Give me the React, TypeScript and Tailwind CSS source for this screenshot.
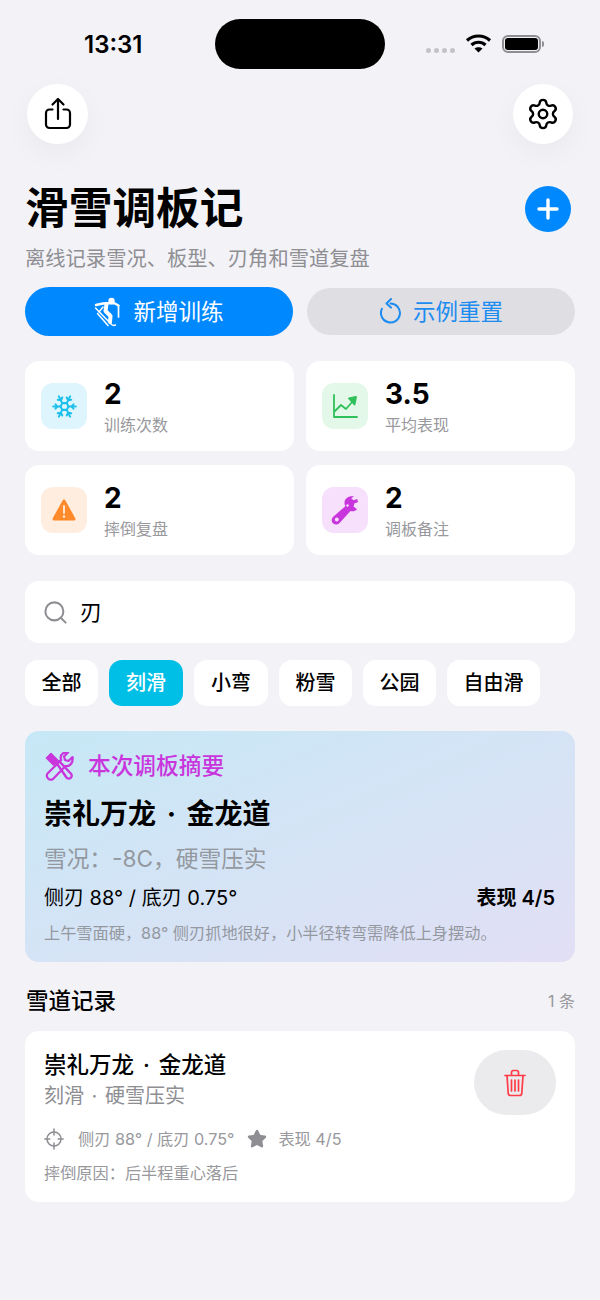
import { Search, Settings, Snowflake, Star } from "lucide-react";

const FONT = { fontFamily: 'Inter, "Noto Sans CJK SC", sans-serif' };

function ShareIcon() {
  return (
    <svg width="30" height="34" viewBox="0 0 30 34" fill="none" stroke="#000" strokeWidth="2.2" strokeLinecap="round" strokeLinejoin="round">
      <path d="M9.5 12.5H6.5a3.5 3.5 0 0 0-3.5 3.5v11.5a3.5 3.5 0 0 0 3.5 3.5h17a3.5 3.5 0 0 0 3.5-3.5V16a3.5 3.5 0 0 0-3.5-3.5h-3" />
      <path d="M15 22V2.5M9.5 7.5 15 2l5.5 5.5" />
    </svg>
  );
}

function SkierIcon() {
  return (
    <svg width="27" height="30" viewBox="0 0 27 30" fill="none" stroke="#fff" strokeLinecap="round" strokeLinejoin="round">
      <circle cx="17.500" cy="4" r="3.200" fill="#fff" stroke="none" />
      <path d="M2 8 9 6.500l11-.5 4.500 2.500" strokeWidth="2.400" />
      <path d="M24.500 8.500V20" strokeWidth="1.700" />
      <path d="M12.500 7l-1 7 5 5-.5 6" strokeWidth="4" />
      <path d="M9 10 5 15" strokeWidth="1.400" />
      <path d="M1.500 11 17.500 27.500q2 1.500 4 .5" strokeWidth="1.500" />
      <path d="M3.500 16.500 14 28.500" strokeWidth="1.500" />
    </svg>
  );
}

function ResetIcon() {
  return (
    <svg width="23" height="27" viewBox="0 0 23 27" fill="none" stroke="#1c8cf0" strokeWidth="2" strokeLinecap="round" strokeLinejoin="round">
      <path d="M11.500 5.500a9.500 9.500 0 1 1-8.600 5.400" />
      <path d="M12 1 7.500 5.500l4.500 4" />
    </svg>
  );
}

function TrendIcon() {
  return (
    <svg width="26" height="26" viewBox="0 0 26 26" fill="none" stroke="#2fc05a" strokeWidth="1.800" strokeLinecap="round" strokeLinejoin="round">
      <path d="M2 2v22h23" />
      <path d="M3 18l6-6 5 4 7-8" />
      <path d="M17 5.500 24 4l-1.500 7.500z" fill="#2fc05a" />
    </svg>
  );
}

function WarningIcon() {
  return (
    <svg width="24" height="24" viewBox="0 0 24 24">
      <path d="M12 3 22 21H2z" fill="#ff8a2b" stroke="#ff8a2b" strokeWidth="3" strokeLinejoin="round" />
      <path d="M12 8v7" stroke="#ffeede" strokeWidth="1.800" strokeLinecap="round" />
      <circle cx="12" cy="18.500" r="1.200" fill="#ffeede" />
    </svg>
  );
}

function WrenchIcon() {
  return (
    <svg width="28" height="30" viewBox="0 0 28 30">
      <path d="M23 1.500c-4.500-1.200-9 1.500-9.500 5.500-.2 1.600.2 3 .8 4.200L2.500 21.500a4.500 4.500 0 1 0 6.300 6.300L19.500 16c2.500.6 4.800 0 6.500-1.800l-3.500-2.800 1-3.200 3.500-1-.8-3.200-3.700 1.200-2.300-2z" fill="#c935dc" />
      <circle cx="5.800" cy="24.500" r="1.900" fill="#f6e0fb" />
      <circle cx="16.500" cy="10.500" r="1.200" fill="#f6e0fb" />
    </svg>
  );
}

function ToolsIcon() {
  return (
    <svg width="29" height="29" viewBox="0 0 29 29" fill="none" stroke="#c935dc" strokeLinecap="round" strokeLinejoin="round">
      <path d="M1.500 6 6 1.500l7 7L8.500 13z" fill="#c935dc" strokeWidth="1.600" />
      <path d="M11.500 11 21.500 25.500a2.800 2.800 0 0 0 4.500-3.800L14 9" strokeWidth="2.400" />
      <path d="M27.500 5 23.500 9 20 8l-1-3.500 4-4c-3.800-.8-7.500 1.500-7.300 5.500 0 .8.200 1.500.5 2L2.500 21.500a4 4 0 0 0 5.500 5.500L20.500 14c4.200 1.200 8-3.500 7-9z" strokeWidth="2.200" />
    </svg>
  );
}

function TargetIcon() {
  return (
    <svg width="20" height="22" viewBox="0 0 20 22" fill="none" stroke="#8e8e93" strokeWidth="1.500" strokeLinecap="round">
      <circle cx="10" cy="11" r="7" />
      <path d="M10 1v6M10 15v6M0.800 11h5M14.200 11h5" />
    </svg>
  );
}

function TrashIcon() {
  return (
    <svg width="22" height="28" viewBox="0 0 22 28" fill="none" stroke="#ff3b47" strokeWidth="1.700" strokeLinecap="round" strokeLinejoin="round">
      <path d="M1 6.500h20M7.500 6V3.500a2 2 0 0 1 2-2h3a2 2 0 0 1 2 2V6" />
      <path d="M3 6.500 4.200 24a2.500 2.500 0 0 0 2.500 2.500h8.600a2.500 2.500 0 0 0 2.500-2.500L19 6.500" />
      <path d="M7.500 11v11M11 11v11M14.500 11v11" />
    </svg>
  );
}

function StatCard({ icon, bg, value, label }: { icon: React.ReactNode; bg: string; value: string; label: string }) {
  return (
    <div className="flex h-[90px] items-center rounded-[14px] bg-white pl-[16px]">
      <div className={`flex h-[46px] w-[46px] items-center justify-center rounded-[12px] ${bg}`}>{icon}</div>
      <div className="ml-[17px] flex flex-col">
        <span className="text-[28px] leading-[35px] font-bold text-black">{value}</span>
        <span className="mt-[2px] text-[16px] leading-[22px] text-[#98989d]">{label}</span>
      </div>
    </div>
  );
}

const chips = [
  { label: "全部", width: "w-[73px]" },
  { label: "刻滑", width: "w-[74px]", active: true },
  { label: "小弯", width: "w-[74px]" },
  { label: "粉雪", width: "w-[73px]" },
  { label: "公园", width: "w-[73px]" },
  { label: "自由滑", width: "w-[93px]" },
];

export default function App() {
  return (
    <div style={FONT} className="h-[1300px] w-[600px] overflow-hidden bg-[#f2f2f7] text-black">
      {/* status bar */}
      <div className="flex h-[84px] items-start">
        <span className="mt-[30px] ml-[84px] w-[60px] text-[24px] leading-[30px] font-semibold">13:31</span>
        <div className="mt-[19px] ml-[71px] h-[50px] w-[170px] rounded-full bg-black" />
        <div className="mt-[48px] ml-[41px] flex gap-[3px]">
          <span className="h-[5px] w-[5px] rounded-full bg-[#c4c4c8]" />
          <span className="h-[5px] w-[5px] rounded-full bg-[#c4c4c8]" />
          <span className="h-[5px] w-[5px] rounded-full bg-[#c4c4c8]" />
          <span className="h-[5px] w-[5px] rounded-full bg-[#c4c4c8]" />
        </div>
        <svg className="mt-[33px] ml-[10px]" width="27" height="20" viewBox="0 0 27 20" fill="none" stroke="#000" strokeWidth="3.200">
          <path d="M2 7.500c6.500-6 16.500-6 23 0M6.500 12c4-3.700 10-3.700 14 0" />
          <path d="M13.500 19.500 9.500 15.500c2.300-1.800 5.700-1.800 8 0z" fill="#000" stroke="none" />
        </svg>
        <div className="mt-[35px] ml-[10px] flex items-center">
          <div className="flex h-[18px] w-[39px] items-center justify-center rounded-[6px] border-2 border-[#8e8e93]">
            <div className="h-[12px] w-[33px] rounded-[3px] bg-black" />
          </div>
          <div className="ml-[1px] h-[6px] w-[2px] rounded-r-full bg-[#8e8e93]" />
        </div>
      </div>

      {/* round toolbar buttons */}
      <div className="flex justify-between px-[27px]">
        <div className="flex h-[60px] w-[61px] items-center justify-center rounded-full bg-white shadow-[0_10px_30px_rgba(0,0,0,0.04)]">
          <ShareIcon />
        </div>
        <div className="flex h-[60px] w-[60px] items-center justify-center rounded-full bg-white shadow-[0_10px_30px_rgba(0,0,0,0.04)]">
          <Settings size={34} strokeWidth={1.700} color="#000" />
        </div>
      </div>

      <div className="px-[25px]">
        {/* title */}
        <div className="mt-[42px] flex h-[46px] items-center justify-between pr-[4px]">
          <h1 className="text-[43.700px] leading-[46px] font-bold">滑雪调板记</h1>
          <div className="flex h-[46px] w-[46px] items-center justify-center rounded-full bg-[#0088ff]">
            <svg width="24" height="24" viewBox="0 0 24 24" stroke="#fff" strokeWidth="3.400" strokeLinecap="round">
              <path d="M12 3v18M3 12h18" />
            </svg>
          </div>
        </div>
        <p className="mt-[13px] text-[20.300px] leading-[28px] text-[#8e8e93]">离线记录雪况、板型、刃角和雪道复盘</p>

        {/* actions */}
        <div className="mt-[14px] flex items-center justify-between">
          <button className="flex h-[49px] w-[268px] items-center justify-center gap-[12px] rounded-full bg-[#0088ff] text-[22.500px] text-white">
            <SkierIcon />
            <span>新增训练</span>
          </button>
          <button className="flex h-[47px] w-[268px] items-center justify-center gap-[11px] rounded-full bg-[#dedee3] text-[22.500px] text-[#1c8cf0]">
            <ResetIcon />
            <span>示例重置</span>
          </button>
        </div>

        {/* stats */}
        <div className="mt-[25px] grid grid-cols-2 gap-x-[12px] gap-y-[14px]">
          <StatCard bg="bg-[#dff5fd]" value="2" label="训练次数" icon={<Snowflake size={27} color="#1cc0ea" strokeWidth={1.800} />} />
          <StatCard bg="bg-[#e3f8e8]" value="3.5" label="平均表现" icon={<TrendIcon />} />
          <StatCard bg="bg-[#ffeee0]" value="2" label="摔倒复盘" icon={<WarningIcon />} />
          <StatCard bg="bg-[#f6e0fb]" value="2" label="调板备注" icon={<WrenchIcon />} />
        </div>

        {/* search */}
        <div className="mt-[26px] flex h-[62px] items-center rounded-[14px] bg-white pl-[17px]">
          <Search size={27} color="#8e8e93" strokeWidth={1.800} />
          <span className="ml-[11px] text-[22px]">刃</span>
        </div>

        {/* categories */}
        <div className="mt-[17px] flex gap-[11px]">
          {chips.map((c) => (
            <div
              key={c.label}
              className={`flex h-[46px] items-center justify-center rounded-[13px] text-[20px] font-medium ${c.width} ${c.active ? "bg-[#00bfe6] text-white" : "bg-white text-black"}`}
            >
              {c.label}
            </div>
          ))}
        </div>

        {/* tuning summary */}
        <div className="mt-[25px] h-[231px] rounded-[14px] bg-gradient-to-br from-[#c6e8f6] to-[#e2dff5] pt-[19px] pr-[20px] pl-[19px]">
          <div className="flex h-[32px] items-center pl-[1px]">
            <ToolsIcon />
            <span className="ml-[14px] text-[22.700px] leading-[32px] font-medium text-[#c935dc]">本次调板摘要</span>
          </div>
          <div className="mt-[14px] text-[28px] leading-[36px] font-bold [word-spacing:4px]">崇礼万龙 · 金龙道</div>
          <div className="mt-[12px] text-[22.700px] leading-[30px] text-[#94989f]">雪况：-8C，硬雪压实</div>
          <div className="mt-[10px] flex justify-between text-[20px] leading-[28px]">
            <span>侧刃 88° / 底刃 0.75°</span>
            <span className="font-semibold">表现 4/5</span>
          </div>
          <div className="mt-[9px] text-[16.200px] leading-[24px] whitespace-nowrap text-[#94989f]">上午雪面硬，88° 侧刃抓地很好，小半径转弯需降低上身摆动。</div>
        </div>

        {/* records */}
        <div className="mt-[24px] flex h-[30px] items-center justify-between pl-[1px]">
          <span className="text-[22.500px] font-medium">雪道记录</span>
          <span className="text-[16px] text-[#98989d]">1 条</span>
        </div>

        <div className="mt-[15px] h-[171px] rounded-[14px] bg-white pt-[18px] pr-[19px] pl-[19px]">
          <div className="flex items-start justify-between">
            <div>
              <div className="text-[22.500px] leading-[32px] font-medium [word-spacing:3px]">崇礼万龙 · 金龙道</div>
              <div className="mt-[1px] text-[20px] leading-[28px] text-[#8e8e93] [word-spacing:2px]">刻滑 · 硬雪压实</div>
            </div>
            <div className="mt-[1px] flex h-[65px] w-[82px] items-center justify-center rounded-full bg-[#ebebed]">
              <TrashIcon />
            </div>
          </div>
          <div className="mt-[12px] flex h-[24px] items-center text-[16.200px] text-[#98989d]">
            <TargetIcon />
            <span className="ml-[14px]">侧刃 88° / 底刃 0.75°</span>
            <Star size={20} className="ml-[13px]" color="#8e8e93" fill="#8e8e93" />
            <span className="ml-[11px]">表现 4/5</span>
          </div>
          <div className="mt-[10px] text-[16.200px] leading-[24px] text-[#98989d]">摔倒原因：后半程重心落后</div>
        </div>
      </div>
    </div>
  );
}
